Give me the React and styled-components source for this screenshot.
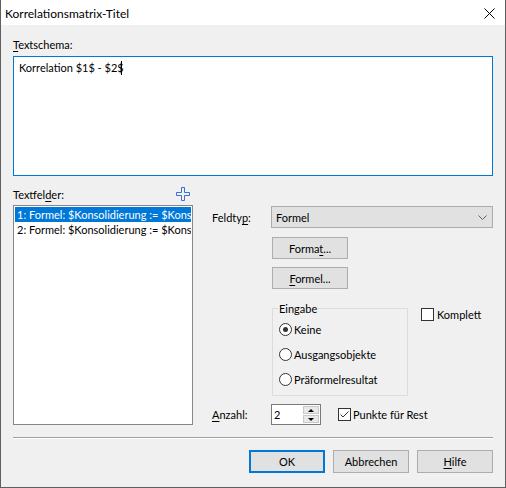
import React from "react";
import styled, { createGlobalStyle } from "styled-components";

const GlobalStyle = createGlobalStyle`
  html, body {
    margin: 0;
    padding: 0;
    background: #f0f0f0;
  }
  body {
    font-family: Lato, "Noto Sans", sans-serif;
    font-size: 11px;
    line-height: 15px;
    color: #000;
  }
`;

const Window = styled.div`
  width: 506px;
  height: 488px;
  box-sizing: border-box;
  border: 1px solid #5f5f5f;
  border-top: none;
  display: flex;
  flex-direction: column;
  background: #f0f0f0;
`;

const TitleBar = styled.div`
  flex: none;
  height: 25px;
  background: #fff;
  display: flex;
  align-items: center;
  justify-content: space-between;
  padding: 1px 10px 0 4px;
  box-sizing: border-box;
  font-size: 12px;
`;

const CloseIcon = styled.svg`
  width: 11px;
  height: 11px;
  display: block;
`;

const Body = styled.div`
  flex: 1;
  display: flex;
  flex-direction: column;
  padding: 12px 12px 0 12px;
`;

const Label = styled.div`
  height: 15px;
  margin-bottom: ${(p) => p.$gap || 0}px;
  white-space: nowrap;
`;

const Acc = styled.span`
  text-decoration: underline;
  text-underline-offset: 2px;
`;

const TextArea = styled.div`
  height: 120px;
  box-sizing: border-box;
  border: 1px solid #0078d7;
  background: #fff;
  padding: 3px 5px;
`;

const Caret = styled.span`
  display: inline-block;
  width: 1px;
  height: 14px;
  background: #000;
  vertical-align: -3px;
  margin-left: -3px;
`;

const Middle = styled.div`
  margin-top: 11px;
  display: grid;
  grid-template-columns: 180px 1fr;
  grid-template-rows: 15px auto;
  column-gap: 19px;
  row-gap: 3px;
`;

const FieldsHeader = styled.div`
  grid-column: 1;
  display: flex;
  align-items: center;
  justify-content: space-between;
  padding-right: 3px;
`;

const PlusIcon = styled.svg`
  width: 14px;
  height: 14px;
  display: block;
  margin-top: -1px;
`;

const ListBox = styled.div`
  grid-column: 1;
  height: 220px;
  box-sizing: border-box;
  border: 1px solid #828790;
  background: #fff;
  padding: 1px;
  overflow: hidden;
`;

const ListItem = styled.div`
  height: 15px;
  padding: 0 2px;
  white-space: nowrap;
  overflow: hidden;
  background: ${(p) => (p.$selected ? "#0078d7" : "transparent")};
  color: ${(p) => (p.$selected ? "#fff" : "#000")};
`;

const RightPanel = styled.div`
  grid-column: 2;
  display: flex;
  flex-direction: column;
  padding-top: 1px;
`;

const Row = styled.div`
  display: flex;
  align-items: ${(p) => p.$align || "center"};
  margin-top: ${(p) => p.$top || 0}px;
  margin-left: ${(p) => p.$indent || 0}px;
`;

const RowLabel = styled.div`
  width: 59px;
  flex: none;
`;

const Combo = styled.div`
  flex: 1;
  height: 22px;
  box-sizing: border-box;
  border: 1px solid #adadad;
  background: #e1e1e1;
  display: flex;
  align-items: center;
  justify-content: space-between;
  padding: 0 5px 0 4px;
`;

const Chevron = styled.svg`
  width: 9px;
  height: 5px;
  display: block;
`;

const Button = styled.div`
  width: ${(p) => p.$w || 76}px;
  height: ${(p) => p.$h || 22}px;
  box-sizing: border-box;
  border: ${(p) => (p.$default ? "2px solid #0078d7" : "1px solid #adadad")};
  background: #e1e1e1;
  display: flex;
  align-items: center;
  justify-content: center;
  flex: none;
`;

const GroupBox = styled.div`
  position: relative;
  width: 136px;
  height: 88px;
  box-sizing: border-box;
  border: 1px solid #dcdcdc;
  padding: 13px 0 0 6px;
  display: flex;
  flex-direction: column;
  gap: 10px;
  flex: none;
`;

const Legend = styled.span`
  position: absolute;
  top: -8px;
  left: 5px;
  padding: 0 1px;
  background: #f0f0f0;
`;

const Option = styled.div`
  display: flex;
  align-items: center;
  height: 15px;
  gap: ${(p) => p.$gap || 2}px;
  margin-left: ${(p) => p.$left || 0}px;
  margin-top: ${(p) => p.$top || 0}px;
  white-space: nowrap;
`;

const Radio = styled.span`
  width: 13px;
  height: 13px;
  box-sizing: border-box;
  border: 1px solid #333;
  border-radius: 50%;
  background: #fff;
  display: flex;
  align-items: center;
  justify-content: center;
  flex: none;

  &::after {
    content: "";
    width: 5px;
    height: 5px;
    border-radius: 50%;
    background: #333;
    display: ${(p) => (p.$checked ? "block" : "none")};
  }
`;

const Check = styled.span`
  width: 13px;
  height: 13px;
  box-sizing: border-box;
  border: 1px solid #333;
  background: #fff;
  display: flex;
  align-items: center;
  justify-content: center;
  flex: none;
`;

const Spin = styled.div`
  width: 50px;
  height: 21px;
  box-sizing: border-box;
  border: 1px solid #7a7a7a;
  background: #fff;
  display: flex;
  flex: none;
`;

const SpinValue = styled.div`
  flex: 1;
  padding-left: 2px;
  display: flex;
  align-items: center;
`;

const SpinButtons = styled.div`
  width: 16px;
  display: flex;
  flex-direction: column;
  gap: 1px;
  padding: 1px 1px 1px 0;
`;

const SpinButton = styled.div`
  flex: 1;
  border: 1px solid #c8c8c8;
  background: #e8e8e8;
  display: flex;
  align-items: center;
  justify-content: center;

  &::after {
    content: "";
    border-left: 3px solid transparent;
    border-right: 3px solid transparent;
    ${(p) =>
      p.$up ? "border-bottom: 3px solid #000;" : "border-top: 3px solid #000;"}
  }
`;

const Separator = styled.div`
  margin-top: 12px;
  border-top: 1px solid #a0a0a0;
  border-bottom: 1px solid #fff;
`;

const Footer = styled.div`
  margin-top: 11px;
  display: flex;
  justify-content: flex-end;
  gap: 8px;
`;

export default function App() {
  return (
    <>
      <GlobalStyle />
      <Window>
        <TitleBar>
          <span>Korrelationsmatrix-Titel</span>
          <CloseIcon viewBox="0 0 11 11">
            <path d="M0.5 0.5L10.5 10.5M10.5 0.5L0.5 10.5" stroke="#000" strokeWidth="1" />
          </CloseIcon>
        </TitleBar>
        <Body>
          <Label $gap={4}>
            <Acc>T</Acc>extschema:
          </Label>
          <TextArea>
            Korrelation $1$ - $2$
            <Caret />
          </TextArea>

          <Middle>
            <FieldsHeader>
              <span>
                Textfel<Acc>d</Acc>er:
              </span>
              <PlusIcon viewBox="0 0 14 14">
                <path
                  d="M5.5 0.5h3v5h5v3h-5v5h-3v-5h-5v-3h5z"
                  fill="none"
                  stroke="#3d6fd4"
                  strokeWidth="1"
                />
              </PlusIcon>
            </FieldsHeader>
            <div />
            <ListBox>
              <ListItem $selected>1: Formel: $Konsolidierung := $Kons</ListItem>
              <ListItem>2: Formel: $Konsolidierung := $Kons</ListItem>
            </ListBox>

            <RightPanel>
              <Row>
                <RowLabel>
                  Feldty<Acc>p</Acc>:
                </RowLabel>
                <Combo>
                  <span>Formel</span>
                  <Chevron viewBox="0 0 9 5">
                    <path d="M0.5 0.5L4.5 4.5L8.5 0.5" fill="none" stroke="#606060" strokeWidth="1" />
                  </Chevron>
                </Combo>
              </Row>
              <Row $indent={60} $top={9}>
                <Button>
                  <span>
                    Forma<Acc>t</Acc>...
                  </span>
                </Button>
              </Row>
              <Row $indent={60} $top={8}>
                <Button>
                  <span>
                    <Acc>F</Acc>ormel...
                  </span>
                </Button>
              </Row>
              <Row $indent={60} $top={19} $align="flex-start">
                <GroupBox>
                  <Legend>Eingabe</Legend>
                  <Option>
                    <Radio $checked />
                    Keine
                  </Option>
                  <Option>
                    <Radio />
                    Ausgangsobjekte
                  </Option>
                  <Option>
                    <Radio />
                    Präformelresultat
                  </Option>
                </GroupBox>
                <Option $left={13} $top={-1} $gap={3}>
                  <Check />
                  Komplett
                </Option>
              </Row>
              <Row $top={8}>
                <RowLabel>
                  <Acc>A</Acc>nzahl:
                </RowLabel>
                <Spin>
                  <SpinValue>2</SpinValue>
                  <SpinButtons>
                    <SpinButton $up />
                    <SpinButton />
                  </SpinButtons>
                </Spin>
                <Option $left={17} $gap={2}>
                  <Check>
                    <svg width="11" height="11" viewBox="0 0 11 11">
                      <path d="M1.5 5.5L4 8L9.5 2.5" fill="none" stroke="#333" strokeWidth="1" />
                    </svg>
                  </Check>
                  Punkte für Rest
                </Option>
              </Row>
            </RightPanel>
          </Middle>

          <Separator />
          <Footer>
            <Button $default $w={76} $h={23}>
              OK
            </Button>
            <Button $w={76} $h={23}>
              Abbrechen
            </Button>
            <Button $w={76} $h={23}>
              <span>
                <Acc>H</Acc>ilfe
              </span>
            </Button>
          </Footer>
        </Body>
      </Window>
    </>
  );
}
